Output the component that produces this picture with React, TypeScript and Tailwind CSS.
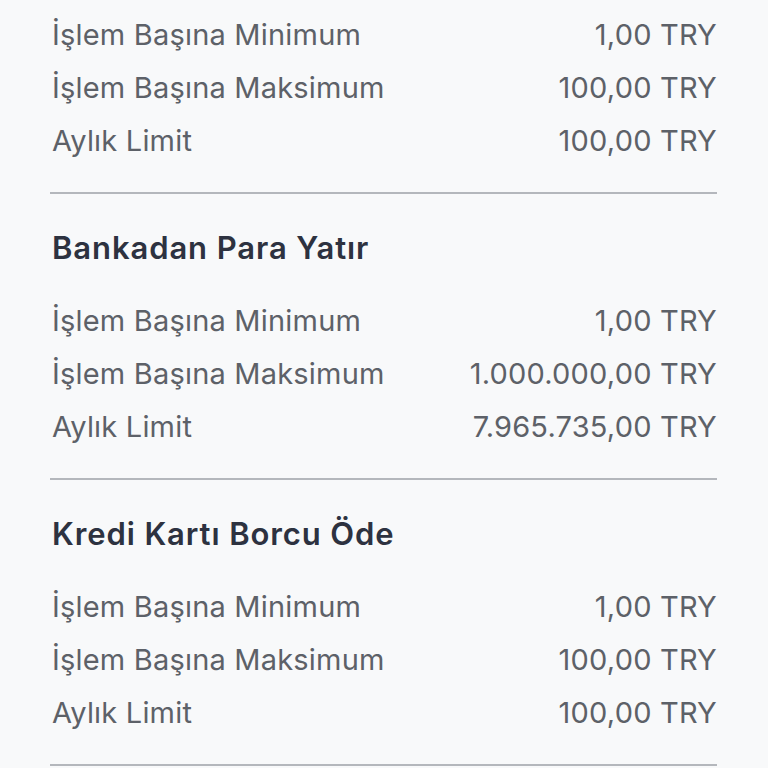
import React from "react";

const sections = [
  {
    title: null as string | null,
    rows: [
      ["İşlem Başına Minimum", "1,00 TRY"],
      ["İşlem Başına Maksimum", "100,00 TRY"],
      ["Aylık Limit", "100,00 TRY"],
    ],
  },
  {
    title: "Bankadan Para Yatır",
    rows: [
      ["İşlem Başına Minimum", "1,00 TRY"],
      ["İşlem Başına Maksimum", "1.000.000,00 TRY"],
      ["Aylık Limit", "7.965.735,00 TRY"],
    ],
  },
  {
    title: "Kredi Kartı Borcu Öde",
    rows: [
      ["İşlem Başına Minimum", "1,00 TRY"],
      ["İşlem Başına Maksimum", "100,00 TRY"],
      ["Aylık Limit", "100,00 TRY"],
    ],
  },
];

export default function App() {
  return (
    <div
      className="w-[768px] h-[768px] overflow-hidden bg-[#f8f9fa] pl-[50px] pr-[51px]"
      style={{ fontFamily: "Inter, 'Noto Sans', sans-serif" }}
    >
      {sections.map((s, i) => (
        <div key={i} className="flex flex-col">
          {s.title && (
            <div className="h-[81px] pt-[36px] pl-[2px] text-[31px] leading-[36px] font-semibold tracking-[0.9px] text-[#2d3240]">
              {s.title}
            </div>
          )}
          <div className={s.title ? "pt-[19px]" : "pt-[8px]"}>
            {s.rows.map((r, j) => (
              <div
                key={j}
                className="h-[53px] flex items-center justify-between pl-[2px] text-[29px] tracking-[0.2px] text-[#5d6168]"
              >
                <span>{r[0]}</span>
                <span>{r[1]}</span>
              </div>
            ))}
          </div>
          <div className="mt-[25px] h-[2px] bg-[#b4b7bc]" />
        </div>
      ))}
    </div>
  );
}
